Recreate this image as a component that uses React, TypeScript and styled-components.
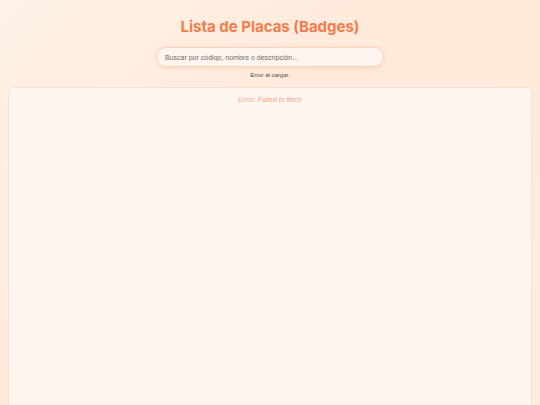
import React from "react";
import styled, { createGlobalStyle } from "styled-components";

const Global = createGlobalStyle`
  html, body {
    margin: 0;
    padding: 0;
    min-height: 100%;
  }
  body {
    margin: 0;
    padding: 0 8px;
    font-family: Inter, "Liberation Sans", Arial, sans-serif;
    background: linear-gradient(135deg, #fff1e6 0%, #ffeadb 40%, #ffeddc 100%);
    min-height: 405px;
    overflow: hidden;
  }
`;

const Page = styled.div`
  display: flex;
  flex-direction: column;
  align-items: center;
  padding-top: 17px;
`;

const Title = styled.h1`
  margin: 0;
  font-family: Inter, "Liberation Sans", sans-serif;
  font-size: 15px;
  font-weight: 700;
  color: #f47c4c;
  line-height: 20px;
`;

const SearchInput = styled.input`
  margin-top: 10px;
  width: 228px;
  height: 20px;
  box-sizing: border-box;
  border: 1px solid #fbd2bd;
  border-radius: 999px;
  background: #fff5f0;
  padding: 0 8px;
  font-family: "Liberation Sans", Arial, sans-serif;
  font-size: 7px;
  color: #555;
  outline: none;
  box-shadow: 0 1px 4px rgba(244, 150, 110, 0.25);
  &::placeholder {
    color: #6f6a66;
  }
`;

const Status = styled.div`
  margin-top: 4px;
  font-family: "Liberation Sans", Arial, sans-serif;
  font-size: 6px;
  color: #4f4b48;
  line-height: 8px;
`;

const Panel = styled.div`
  margin-top: 8px;
  align-self: stretch;
  height: 400px;
  background: #fff6f0;
  border: 1px solid #f9e1cf;
  border-radius: 6px;
  display: flex;
  flex-direction: column;
  align-items: center;
  padding-top: 7px;
  box-sizing: border-box;
`;

const ErrorText = styled.div`
  font-family: "Liberation Sans", Arial, sans-serif;
  font-style: italic;
  font-size: 7px;
  color: #f4a58a;
  line-height: 9px;
`;

export default function App() {
  return (
    <>
      <Global />
      <Page>
        <Title>Lista de Placas (Badges)</Title>
        <SearchInput placeholder="Buscar por código, nombre o descripción..." />
        <Status>Error al cargar.</Status>
        <Panel>
          <ErrorText>Error: Failed to fetch</ErrorText>
        </Panel>
      </Page>
    </>
  );
}
